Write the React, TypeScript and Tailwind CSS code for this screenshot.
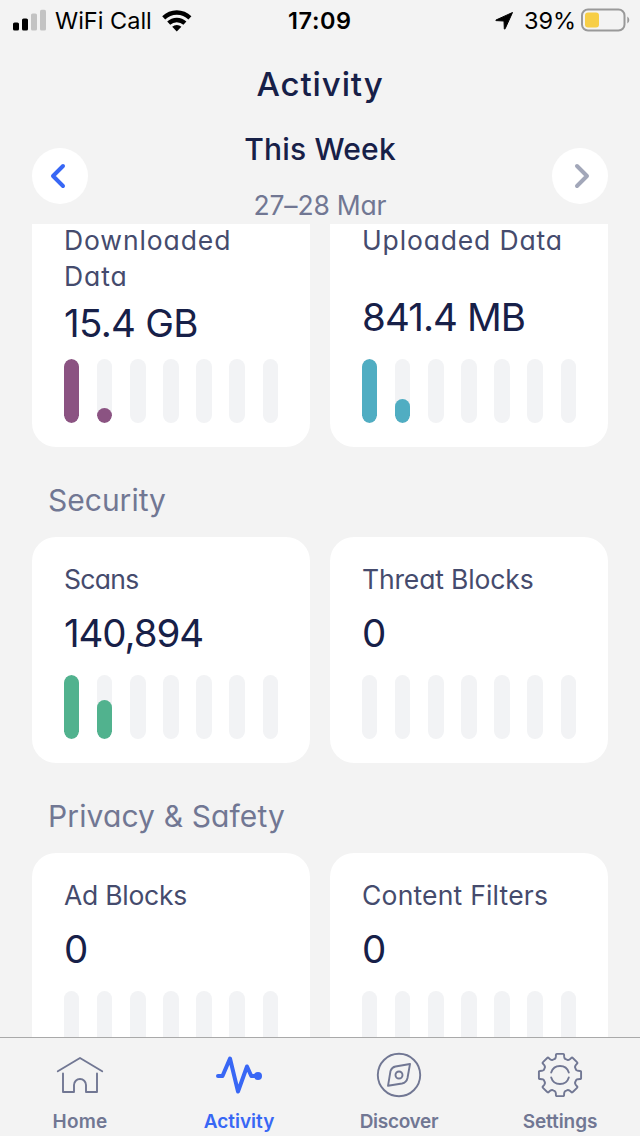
import React from "react";

type Metric = { title: string; value: string; fill?: string; bars?: number[]; tracking: string; valueTracking: string };

function Bars({ fill = "#ffffff", bars = [] }: { fill?: string; bars?: number[] }) {
  return (
    <div className="flex h-16 shrink-0 justify-between">
      {[0, 1, 2, 3, 4, 5, 6].map((i) => (
        <div key={i} className="flex h-16 w-[15.4px] flex-col justify-end overflow-hidden rounded-full bg-[#f2f3f5]">
          {bars[i] ? <div className="w-full rounded-full" style={{ height: bars[i], backgroundColor: fill }} /> : null}
        </div>
      ))}
    </div>
  );
}

function Card({ metric, tall = false }: { metric: Metric; tall?: boolean }) {
  return (
    <div className={`flex w-[278px] flex-col justify-between rounded-3xl bg-white px-8 pb-6 pt-6 ${tall ? "h-[249px]" : "h-[226px]"}`}>
      <div className="flex flex-col">
        <div className={`text-[26.5px] leading-9 text-[#454b6d] ${tall ? "h-[72px]" : "h-9"} ${metric.tracking}`}>{metric.title}</div>
        <div
          className={`whitespace-nowrap text-[38.5px] leading-[46px] text-[#172048] ${metric.valueTracking} ${
            !tall ? "mt-[13px]" : metric.title === "Uploaded Data" ? "mt-0" : "mt-[6px]"
          }`}
        >
          {metric.value}
        </div>
      </div>
      <Bars fill={metric.fill} bars={metric.bars} />
    </div>
  );
}

function point(radius: number, degrees: number) {
  const a = ((degrees - 90) * Math.PI) / 180;
  return `${(24 + radius * Math.cos(a)).toFixed(2)} ${(24 + radius * Math.sin(a)).toFixed(2)}`;
}

const gearPath =
  [0, 45, 90, 135, 180, 225, 270, 315]
    .map(
      (d, i) =>
        `${i ? "L" : "M"}${point(20.4, d - 11.5)} Q${point(21.6, d - 11)} ${point(21.3, d - 8)} L${point(21.3, d + 8)} Q${point(21.6, d + 11)} ${point(20.4, d + 11.5)} L${point(18.6, d + 13)} Q${point(16.4, d + 16)} ${point(16.9, d + 22.5)} Q${point(16.4, d + 29)} ${point(18.6, d + 32)}`,
    )
    .join(" ") + "Z";

function StatusBar() {
  return (
    <div className="flex h-[41px] shrink-0 items-center text-black [font-feature-settings:normal]">
      <div className="flex w-[288px] items-center pl-[13px]">
        <svg width="34" height="24" viewBox="0 0 34 24">
          <rect x="0" y="13.5" width="6" height="8" rx="1.6" />
          <rect x="9" y="9.5" width="6" height="12" rx="1.6" />
          <rect x="18" y="4.5" width="6" height="17" rx="1.6" fill="#c3c3c3" />
          <rect x="27" y="0.8" width="6" height="20.7" rx="1.6" fill="#c3c3c3" />
        </svg>
        <span className="ml-[8px] w-[105px] whitespace-nowrap text-[23.5px]">WiFi Call</span>
        <svg className="ml-px" width="32" height="24" viewBox="0 0 32 24">
          <path d="M1.2 7.2a20.8 20.8 0 0 1 29.2 0l-3 3.300a16.600 16.600 0 0 0-23.200 0z" />
          <path d="M6.200 12.600a13.800 13.800 0 0 1 19.200 0l-3 3.200a9.600 9.600 0 0 0-13.200 0z" />
          <path d="M11.200 17.800a6.800 6.800 0 0 1 9.200 0l-4.600 4.700z" />
        </svg>
      </div>
      <span className="w-[216px] whitespace-nowrap text-[23.5px] font-semibold tracking-[0.6px]">17:09</span>
      <svg width="20" height="20" viewBox="495 11 20 20" className="-ml-[9px] mt-px" stroke="#000" strokeWidth="1" strokeLinejoin="round">
        <path d="M512.500 12.500 496 20q-.5.500.2.600l7.800.4.300 7.700q.3.800.8.100z" />
      </svg>
      <span className="ml-[9px] w-[57px] whitespace-nowrap text-[23.5px] tracking-[-0.1px]">39%</span>
      <svg width="50" height="24" viewBox="0 0 50 24" className="-mt-px shrink-0">
        <rect x="1" y="1.5" width="42.5" height="21" rx="6" fill="none" stroke="#999" strokeWidth="2" />
        <rect x="4" y="4.5" width="14" height="15" rx="3" fill="#f7ce46" />
        <path d="M46.3 8.5q2 1 2 3.5t-2 3.5z" fill="#999" />
      </svg>
    </div>
  );
}

const downloaded: Metric = { title: "Downloaded Data", value: "15.4 GB", fill: "#8b5382", bars: [64, 15.4], tracking: "tracking-[0.9px]", valueTracking: "tracking-[-0.7px]" };
const uploaded: Metric = { title: "Uploaded Data", value: "841.4 MB", fill: "#50adc2", bars: [64, 24.5], tracking: "tracking-[0.85px]", valueTracking: "tracking-[-0.9px]" };
const scans: Metric = { title: "Scans", value: "140,894", fill: "#51b28e", bars: [64, 39], tracking: "tracking-[-0.7px]", valueTracking: "tracking-[-1.1px]" };
const threats: Metric = { title: "Threat Blocks", value: "0", tracking: "tracking-[-0.15px]", valueTracking: "tracking-normal" };
const ads: Metric = { title: "Ad Blocks", value: "0", tracking: "tracking-[-0.25px]", valueTracking: "tracking-normal" };
const filters: Metric = { title: "Content Filters", value: "0", tracking: "tracking-[0.2px]", valueTracking: "tracking-normal" };

export default function App() {
  return (
    <div className="flex h-[1136px] w-[640px] flex-col overflow-hidden bg-[#f3f3f3] font-['Inter',sans-serif] [font-feature-settings:'cv11']">
      <StatusBar />
      <header className="flex h-[183px] shrink-0 flex-col">
        <h1 className="mt-[23px] h-10 text-center text-[33px] font-medium leading-10 tracking-[0.9px] text-[#172048]">Activity</h1>
        <div className="mt-[24px] flex items-start justify-between px-8">
          <button className="mt-5 flex size-14 items-center justify-center rounded-full bg-white">
            <svg width="56" height="56" viewBox="0 0 56 56" fill="none" stroke="#3867f5" strokeWidth="4" strokeLinecap="round" strokeLinejoin="round">
              <path d="M31 18 21 28 31 38" />
            </svg>
          </button>
          <div className="flex flex-col items-center whitespace-nowrap">
            <div className="h-[42px] text-[30px] font-medium leading-[42px] tracking-[0.2px] text-[#172048]">This Week</div>
            <div className="mt-[17px] h-9 text-[26.5px] leading-9 tracking-[-0.2px] text-[#717793]">27–28 Mar</div>
          </div>
          <button className="mt-5 flex size-14 items-center justify-center rounded-full bg-white">
            <svg width="56" height="56" viewBox="0 0 56 56" fill="none" stroke="#a2a7b9" strokeWidth="4" strokeLinecap="round" strokeLinejoin="round">
              <path d="M25 18 35 28 25 38" />
            </svg>
          </button>
        </div>
      </header>
      <main className="flex h-[813px] shrink-0 flex-col overflow-hidden px-8">
        <div className="-mt-[26px] flex shrink-0 justify-between">
          <Card metric={downloaded} tall />
          <Card metric={uploaded} tall />
        </div>
        <h2 className="h-[90px] shrink-0 pl-4 pt-[33px] text-[30px] leading-10 text-[#717793]">Security</h2>
        <div className="flex shrink-0 justify-between">
          <Card metric={scans} />
          <Card metric={threats} />
        </div>
        <h2 className="h-[90px] shrink-0 pl-4 pt-[33px] text-[30px] leading-10 tracking-[0.12px] text-[#717793]">Privacy &amp; Safety</h2>
        <div className="flex shrink-0 justify-between">
          <Card metric={ads} />
          <Card metric={filters} />
        </div>
      </main>
      <nav className="grid h-[99px] shrink-0 grid-cols-4 border-t border-[#a9a9a9] text-[19px] font-semibold text-[#717793]">
        <div className="flex flex-col items-center pt-[13px]">
          <svg width="48" height="48" viewBox="0 0 48 48" fill="none" stroke="currentColor" strokeWidth="1.9" strokeLinecap="round" strokeLinejoin="round">
            <path d="M1.800 20.200 24 7l22.200 13.200M7 22.500V41h11V34a6 6 0 0 1 12 0v7h11V22.500" />
          </svg>
          <span className="mt-[11px] leading-6 tracking-[0.2px]">Home</span>
        </div>
        <div className="flex flex-col items-center pr-[2px] pt-[13px] text-[#3867f5]">
          <svg width="48" height="48" viewBox="0 0 48 48" fill="none" stroke="currentColor" strokeWidth="4" strokeLinecap="round" strokeLinejoin="round">
            <path d="M3 25h4.500L15 7.500 23 40.500 32 15.500 36.300 25H43" />
            <circle cx="43" cy="25" r="4" fill="currentColor" stroke="none" />
          </svg>
          <span className="mt-[11px] leading-6">Activity</span>
        </div>
        <div className="flex flex-col items-center pr-[2px] pt-[13px]">
          <svg width="48" height="48" viewBox="0 0 48 48" fill="none" stroke="currentColor" strokeWidth="1.9" strokeLinecap="round" strokeLinejoin="round">
            <circle cx="24" cy="24" r="21.200" />
            <path d="M35 13 20.500 15.500Q16.800 16.200 15.500 20L13 34.800 27 32.500Q31.500 31.500 32.500 27z" />
            <circle cx="24" cy="24" r="3.500" />
          </svg>
          <span className="mt-[11px] leading-6 tracking-[-0.3px]">Discover</span>
        </div>
        <div className="flex flex-col items-center pt-[13px]">
          <svg width="48" height="48" viewBox="0 0 48 48" fill="none" stroke="currentColor" strokeWidth="1.9" strokeLinecap="round" strokeLinejoin="round">
            <path d={gearPath} />
            <path d="M15.200 21.500a9.200 9.200 0 0 1 17.600 0M15.200 26.500a9.200 9.200 0 0 0 17.600 0" />
          </svg>
          <span className="mt-[11px] leading-6 tracking-[-0.1px]">Settings</span>
        </div>
      </nav>
    </div>
  );
}
